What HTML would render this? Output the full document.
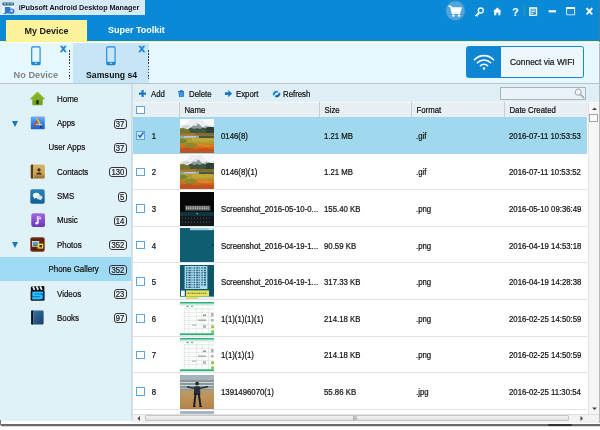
<!DOCTYPE html>
<html>
<head>
<meta charset="utf-8">
<title>iPubsoft Android Desktop Manager</title>
<style>
*{box-sizing:border-box;margin:0;padding:0}
html,body{width:600px;height:430px;overflow:hidden;background:#fff}
body{font-family:"Liberation Sans",sans-serif;font-size:7.8px;color:#222;position:relative}
.abs{position:absolute}
#win{position:absolute;left:0;top:0;width:600px;height:424px;background:#fff;overflow:hidden}
#shadow{position:absolute;left:1px;top:424px;width:599px;height:1.500px;background:#6a6a6a}
#shadow2{position:absolute;left:2px;top:425.500px;width:598px;height:1.500px;background:linear-gradient(#b9b9b9,#f6f6f6)}
#hdr{position:absolute;left:0;top:0;width:600px;height:42px;background:#0a89d7}
#title{position:absolute;left:0;top:0;width:145px;height:14.600px;background:#d5e9f7}
#title span{position:absolute;left:18.800px;top:2.800px;font-size:7.230px;font-weight:bold;color:#151515;white-space:nowrap;line-height:10px;transform:scaleY(1.12)}
#tab1{position:absolute;left:6px;top:20px;width:81px;height:22px;background:#fdf39b;font-size:9px;font-weight:bold;color:#1a1a1a;text-align:center;line-height:21px}
#tab1 b,#tab2 b{display:inline-block;position:relative;top:.7px;transform:scaleY(1.1)}
#tab2 b{top:.2px}
#tab2{position:absolute;left:108px;top:20px;font-size:9px;font-weight:bold;color:#fff;line-height:21px;white-space:nowrap}
#yline{position:absolute;left:0;top:40.800px;width:600px;height:1.700px;background:#f9f18f;z-index:2}
#devbar{position:absolute;left:0;top:42.500px;width:600px;height:40.500px;background:#e6f8fd}
#dev2{position:absolute;left:73px;top:0;width:76px;height:40.500px;background:#c6e5f6}
.devname{position:absolute;top:27.100px;font-size:8.7px;font-weight:bold;white-space:nowrap;line-height:11px;transform:scaleY(1.1);transform-origin:0 50%}
.devx{position:absolute;top:.5px;font-size:11.500px;font-weight:bold;color:#1583cf;line-height:10px;-webkit-text-stroke:.35px #1583cf}
.dots{position:absolute;top:7.500px;width:1.300px;height:29px;background:repeating-linear-gradient(#3a3a3a 0,#3a3a3a 1.700px,transparent 1.700px,transparent 3.100px)}
#wifi{position:absolute;left:466px;top:3.500px;width:118px;height:32px;border:1.300px solid #1587d3;border-radius:2.500px;background:#edf8fd}
#wifi .b{position:absolute;left:0;top:0;width:34px;height:30px;background:#0f86d4}
#wifi .t{position:absolute;left:43px;top:-.3px;line-height:30px;font-size:8.45px;color:#151515;white-space:nowrap;transform:scaleY(1.12);-webkit-text-stroke:.2px #151515}
#side{position:absolute;left:0;top:84px;width:131.200px;height:337px;background:#e1f1f8}
#sideb{position:absolute;left:131.200px;top:84px;width:1.800px;height:337px;background:linear-gradient(90deg,#c9d8df,#d9e4e9)}
.it{position:absolute;left:0;width:131px;height:24px}
.it .ic{position:absolute;left:30px;top:4px;width:15px;height:15px}
.it .tx{position:absolute;left:57px;top:1.2px;font-size:7.950px;line-height:24px;white-space:nowrap;color:#111;transform:scaleY(1.14);-webkit-text-stroke:.2px #111}
.it.sub .tx{left:48.5px}
.it .bd{position:absolute;right:4.5px;top:7.5px;height:10px;border:1px solid #333;border-radius:3px;padding:0 1.200px;line-height:8px;font-size:7.700px;color:#222;background:rgba(255,255,255,.25)}
.it .bd b{display:inline-block;position:relative;top:.9px;font-weight:normal;transform:scaleY(1.14);-webkit-text-stroke:.2px #222}
.it .ar{position:absolute;left:12px;top:9.5px;width:0;height:0;border-left:3.5px solid transparent;border-right:3.5px solid transparent;border-top:6px solid #1878bd}
.it.sel{background:#9edaf3}
#main{position:absolute;left:133px;top:84px;width:467px;height:338.500px;overflow:hidden;background:#fff}
#tb{position:absolute;left:0;top:0;width:467px;height:18px;background:#e0eff6}
#topline{position:absolute;left:0;top:83px;width:600px;height:1px;background:#b9c6cc}
.tbi{position:absolute;top:2.4px;line-height:18px;white-space:nowrap;color:#111;transform:scaleY(1.14);-webkit-text-stroke:.2px #111}
.tbic{position:absolute;top:5.8px;width:8px;height:8px}
#search{position:absolute;left:367px;top:2.5px;width:86px;height:13px;border:1px solid #aab4b9;background:#e9f3f8}
#th{position:absolute;left:0;top:18px;width:455px;height:15px;background:#e8eff3;border-top:1px solid #f3f8fa}
#th .c{position:absolute;top:-1px;height:15px;line-height:14px;border-left:1px solid #c3cdd3;padding-left:4.900px;color:#111;margin-left:.6px}
#th .c b{display:inline-block;font-weight:normal;position:relative;top:2.200px;transform:scaleY(1.14);-webkit-text-stroke:.2px #111}
.row{position:absolute;left:0;width:454px;height:36.6px;border-bottom:1px solid #dfe3e5;background:#fff}
.row.sel{background:#a0d9ee;border-bottom-color:#a0d9ee}
.row div{position:absolute;top:1.9px;line-height:36px;white-space:nowrap;color:#111;transform:scaleY(1.14);-webkit-text-stroke:.2px #111}
.row .cb,.hcb{position:absolute;left:3.300px;top:14px;width:8.5px;height:8.5px;border:1px solid #5fa4db;background:#fff}
.hcb{top:2.500px;left:3.300px}
.row .n{left:18.800px}
.row .th{left:47px;top:1.5px;width:34px;height:34px;overflow:hidden;transform:none;line-height:0}
.row .nm{left:88px}
.row .sz{left:191px}
.row .fm{left:283px}
.row .dt{left:376px}
#vs{position:absolute;left:455px;top:19px;width:12px;height:311px;background:#f6f6f6;border-left:1px solid #e2e2e2}
#hs{position:absolute;left:0;top:329.500px;width:467px;height:9.500px;background:#f2f2f2;border-top:1px solid #e0e0e0}
</style>
</head>
<body>
<div id="win">
  <div id="hdr">
    <div id="title">
      <svg class="abs" style="left:1.500px;top:1.500px" width="13" height="12.500" viewBox="0 0 13 12.500">
        <rect x=".3" y=".3" width="12" height="12" rx="1" fill="#f3f8fc"/>
        <rect x=".5" y=".4" width="11.400" height="3" rx=".7" fill="#1f5a7e"/>
        <path d="M1.800 1.900h2.400M5.200 1.900h2.200M8.400 1.900h2.400" stroke="#d8ecf6" stroke-width="1"/>
        <rect x="2.800" y="5" width="5.600" height="6.600" rx=".6" fill="#2c7bc9"/>
        <rect x="1.600" y="11.200" width="2.400" height=".8" fill="#2a5f86"/>
        <circle cx="9.700" cy="9.300" r="2.700" fill="#2f6fe6"/>
        <circle cx="9.500" cy="8.900" r="1.300" fill="#bfe6fb"/>
      </svg>
      <span>iPubsoft Android Desktop Manager</span>
    </div>
    <div id="tab1"><b>My Device</b></div>
    <div id="tab2"><b>Super Toolkit</b></div>
    <!-- title icons -->
    <svg class="abs" style="left:440px;top:0" width="160" height="22" viewBox="0 0 160 22">
      <circle cx="15.4" cy="10.700" r="9.600" fill="#50a6dc" stroke="#3c95cf" stroke-width=".6"/>
      <path d="M8.5 6.2h2.2l1.6 7h7.2l1.6-5.2h-10" fill="none" stroke="#fff" stroke-width="1.5" stroke-linejoin="round"/>
      <path d="M11.5 8.3h9.3l-1.4 4.4h-6.9z" fill="#fff"/>
      <circle cx="13.4" cy="15.6" r="1.2" fill="#fff"/><circle cx="19" cy="15.6" r="1.2" fill="#fff"/>
      <!-- key -->
      <circle cx="40.8" cy="10.5" r="2.5" fill="none" stroke="#fff" stroke-width="1.3"/>
      <path d="M38.9 12.4l-3.7 3.7m1.1-1.1l1.4 1.4m.2-2.800l1.200 1.200" stroke="#fff" stroke-width="1.3" fill="none"/>
      <!-- home -->
      <path d="M53 11.6l4.3-4.2 4.3 4.2h-1.2v3.7h-2.1v-2.6h-2v2.6h-2.1v-3.7z" fill="#fff"/>
      <!-- ? -->
      <text x="72" y="16.200" font-family="Liberation Sans, sans-serif" font-weight="bold" font-size="10.800" fill="#fff">?</text>
      <rect x="83.8" y="5" width=".8" height="11" fill="#39b36a"/>
      <!-- doc -->
      <path d="M89.900 8h6.600v7.400h-6.600z" fill="none" stroke="#fff" stroke-width="1.400"/>
      <path d="M91.200 10h4M91.200 11.700h4M91.200 13.400h2.400" stroke="#fff" stroke-width=".9"/>
      <path d="M95.2 13.2l2.2 2.6-1 .1-.3.9z" fill="#fff" stroke="#0a89d7" stroke-width=".3"/>
      <!-- min -->
      <rect x="108.7" y="10.2" width="7.3" height="2.2" fill="#fff"/>
      <!-- max -->
      <path d="M126.600 7.600h8v7.200h-8z" fill="none" stroke="#eaf4fb" stroke-width=".9"/>
      <rect x="126.2" y="7" width="8.8" height="2" fill="#fff"/>
      <!-- close -->
      <path d="M146.6 8.2l5.6 6.2m0-6.2l-5.6 6.2" stroke="#fff" stroke-width="1.9"/>
    </svg>
  </div>
  <div id="yline"></div>
  <div id="devbar">
    <div id="dev2"></div>
    <svg class="abs" style="left:31px;top:3.800px" width="10.200" height="19.800" preserveAspectRatio="none" viewBox="0 0 11 20">
      <rect x=".8" y=".8" width="9" height="18" rx="1" fill="#e6f8fd" stroke="#1b86d2" stroke-width="1.200"/>
      <rect x=".8" y="16" width="9" height="2.800" fill="#1b86d2"/><rect x="4" y="16.900" width="2.600" height=".9" fill="#d9eefa"/>
    </svg>
    <div class="devname" style="left:13.600px;top:27.400px;color:#848484;font-size:9.200px;transform:scaleY(1.02)">No Device</div>
    <div class="devx" style="left:60px">x</div>
    <div class="dots" style="left:69px"></div>
    <svg class="abs" style="left:106px;top:3.800px" width="10.200" height="19.800" preserveAspectRatio="none" viewBox="0 0 11 20">
      <rect x=".8" y=".8" width="9" height="18" rx="1" fill="#c9e7f7" stroke="#1b86d2" stroke-width="1.200"/>
      <rect x=".8" y="16" width="9" height="2.800" fill="#1b86d2"/><rect x="4" y="16.900" width="2.600" height=".9" fill="#d9eefa"/>
    </svg>
    <div class="devname" style="left:86px;color:#111">Samsung s4</div>
    <div class="devx" style="left:138.500px">x</div>
    <div class="dots" style="left:148px"></div>
    <div id="wifi"><div class="b">
      <svg class="abs" style="left:5.500px;top:7px" width="22" height="16.500" viewBox="0 0 24 18">
        <path d="M1.6 6.2a14.5 14.5 0 0 1 20.8 0" fill="none" stroke="#fff" stroke-width="1.7" stroke-linecap="round"/>
        <path d="M4.8 9.6a10 10 0 0 1 14.4 0" fill="none" stroke="#fff" stroke-width="1.7" stroke-linecap="round"/>
        <path d="M8 12.8a5.6 5.6 0 0 1 8 0" fill="none" stroke="#fff" stroke-width="1.7" stroke-linecap="round"/>
        <circle cx="12" cy="15.8" r="1.3" fill="#fff"/>
      </svg></div>
      <div class="t">Connect via WIFI</div>
    </div>
  </div>
  <div id="topline"></div>
  <div class="abs" style="left:599px;top:0;width:1px;height:42px;background:#3f7ea8;z-index:5"></div><div class="abs" style="left:598.5px;top:43px;width:1.5px;height:380px;background:#b4bcc0;z-index:5"></div>
  <div id="side">
<div class="it" style="top:3.0px"><svg class="ic" viewBox="0 0 15 15"><path d="M7.500 .800L.300 7.700l.700.900 1.300-.600v5.200c0 .600.400 1 1 1h8.400c.600 0 1-.400 1-1V8l1.300.600.700-.900z" fill="#76a31f"/><path d="M7.500 .800L.300 7.700l.700.900L7.500 3l6.500 5.600.700-.900z" fill="#93bd2e"/><path d="M7.500 3.400L3 7.400v2.200l4.500-1.600 4.500 1.600V7.400z" fill="#84b026"/><rect x="6.300" y="9.200" width="2.400" height="4" rx=".4" fill="#1b2430"/></svg><span class="tx">Home</span></div>
<div class="it" style="top:27.2px"><i class="ar"></i><svg class="ic" viewBox="0 0 15 15"><defs><linearGradient id="ga" x1="0" y1="0" x2="0" y2="1"><stop offset="0" stop-color="#6fb2f2"/><stop offset=".55" stop-color="#2f7fe6"/><stop offset="1" stop-color="#1a5fdc"/></linearGradient></defs><rect x=".800" y="1.600" width="14" height="12.600" rx=".8" fill="url(#ga)"/><path d="M4.300 11.800L8.300 3.400" stroke="#d8392b" stroke-width="1.500"/><path d="M11 11.800L6.800 3.200" stroke="#f0c93a" stroke-width="1.400"/><path d="M3.400 9.400h8.600" stroke="#d9c9a0" stroke-width="1.100"/><path d="M10.400 10.600l1 2" stroke="#222" stroke-width="1.300"/><path d="M3.600 9.400h2" stroke="#c0392b" stroke-width="1.300"/></svg><span class="tx">Apps</span><span class="bd"><b>37</b></span></div>
<div class="it sub" style="top:51.3px"><span class="tx">User Apps</span><span class="bd"><b>37</b></span></div>
<div class="it" style="top:75.7px"><svg class="ic" viewBox="0 0 15 15"><defs><linearGradient id="gc" x1="0" y1="0" x2="0" y2="1"><stop offset="0" stop-color="#d9b86c"/><stop offset=".7" stop-color="#c59a4c"/><stop offset="1" stop-color="#8a6428"/></linearGradient></defs><rect x=".800" y=".400" width="14" height="14.200" rx="1.600" fill="url(#gc)"/><rect x=".800" y=".400" width="3" height="14.200" rx="1.200" fill="#5a3c14"/><rect x="3.300" y=".400" width=".8" height="14.200" fill="#e6cf8e"/><circle cx="9" cy="5.800" r="1.600" fill="#3e2a10"/><path d="M6.400 10.400c0-2.600 5.200-2.600 5.200 0z" fill="#3e2a10"/></svg><span class="tx">Contacts</span><span class="bd"><b>130</b></span></div>
<div class="it" style="top:100.2px"><svg class="ic" style="top:4.700px" viewBox="0 0 15 15"><defs><linearGradient id="gs" x1="0" y1="0" x2="0" y2="1"><stop offset="0" stop-color="#2a86b8"/><stop offset="1" stop-color="#0f5f93"/></linearGradient></defs><rect x=".3" y=".3" width="14.4" height="14.4" rx="1.8" fill="url(#gs)"/><ellipse cx="6.3" cy="6.4" rx="3.4" ry="2.6" fill="#f2f8fb"/><path d="M4.4 8l-.6 2 2-1.2z" fill="#f2f8fb"/><ellipse cx="9.6" cy="8.4" rx="2.8" ry="2.1" fill="#cfe4ee"/><path d="M10.8 9.8l.8 1.6-2-.8z" fill="#cfe4ee"/></svg><span class="tx">SMS</span><span class="bd"><b>5</b></span></div>
<div class="it" style="top:124.3px"><svg class="ic" style="top:5px;left:30.600px;width:14.400px;height:14.400px" viewBox="0 0 15 15"><defs><linearGradient id="gm" x1="0" y1="0" x2="0" y2="1"><stop offset="0" stop-color="#a06be0"/><stop offset="1" stop-color="#6a35b8"/></linearGradient></defs><rect x=".3" y=".3" width="14.4" height="14.4" rx="2.4" fill="url(#gm)"/><path d="M6.6 10.4V3.6l3.4 1v1.6l-2.4-.8v5.2" fill="none" stroke="#f3eafd" stroke-width="1"/><ellipse cx="6" cy="10.6" rx="1.6" ry="1.3" fill="#f3eafd"/></svg><span class="tx">Music</span><span class="bd"><b>14</b></span></div>
<div class="it" style="top:148.8px"><i class="ar"></i><svg class="ic" viewBox="0 0 15 15"><rect x=".3" y=".3" width="14.4" height="14.4" rx="2" fill="#7a3218"/><rect x="1.2" y="1.2" width="12.6" height="12.6" rx="1.4" fill="#5d2410"/><rect x="2" y="4" width="7.2" height="5.6" fill="#e8f0e0" /><rect x="2.7" y="4.7" width="5.8" height="4.2" fill="#5b9bd0"/><path d="M2.7 8.9l2-2 1.6 1.2 1.2-1 1 1.8z" fill="#4c8a3a"/><rect x="7.6" y="6.6" width="5.6" height="5" fill="#f4d53a"/><rect x="9.4" y="8" width="2.6" height="2.4" fill="#333"/></svg><span class="tx">Photos</span><span class="bd"><b>352</b></span></div>
<div class="it sub sel" style="top:173.2px"><span class="tx">Phone Gallery</span><span class="bd"><b>352</b></span></div>
<div class="it" style="top:197.8px"><svg class="ic" viewBox="0 0 15 15"><rect x=".600" y="3.800" width="14" height="11" rx="1.600" fill="#0c1116"/><path d="M.800 1.400Q.800 .4 2 .4L13.400 0q1 0 1 1v3H.800z" fill="#111"/><path d="M3 .600l1.600 3.200M6.600 .400l1.600 3.400M10.200 .300l1.600 3.500" stroke="#f4f4f4" stroke-width="1.700"/><rect x="1.800" y="5.600" width="11.600" height="7.800" rx=".6" fill="#1767c9"/><path d="M12.600 6.600H5c-2.200 0-2.200 2.800 0 2.800h5c2 0 2 2.800 0 2.800H2.400" fill="none" stroke="#25c9f7" stroke-width="1.900"/></svg><span class="tx">Videos</span><span class="bd"><b>23</b></span></div>
<div class="it" style="top:221.8px"><svg class="ic" viewBox="0 0 15 15"><defs><linearGradient id="gb" x1="0" y1="0" x2="1" y2="1"><stop offset="0" stop-color="#3a78a8"/><stop offset="1" stop-color="#173f66"/></linearGradient></defs><rect x="1.2" y=".6" width="12.4" height="13.8" rx=".8" fill="url(#gb)"/><rect x="1.2" y=".6" width="2.2" height="13.8" fill="#0a0f14"/><rect x="3.4" y=".6" width=".6" height="13.8" fill="#5b93bd"/></svg><span class="tx">Books</span><span class="bd"><b>97</b></span></div>
</div>
  <div id="sideb"></div>
  <div id="main">
<div id="tb">
<svg class="tbic" style="left:6.300px;top:6.100px;width:7.200px;height:7.200px" viewBox="0 0 8 8"><path d="M2.8 0h2.4v2.8H8v2.4H5.2V8H2.8V5.2H0V2.8h2.8z" fill="#1679c6"/></svg><span class="tbi" style="left:18px">Add</span>
<svg class="abs" style="left:44.600px;top:5.800px" width="6.800" height="7.600" viewBox="0 0 8 9"><path d="M.6 2.800h6.800l-.5 4.800q-.1 1.200-1.300 1.200H2.400q-1.200 0-1.300-1.200z" fill="#1f86d6"/><rect x="0" y="1.300" width="8" height="1.300" rx=".4" fill="#1a74c4"/><rect x="2.600" y=".1" width="2.800" height="1.400" rx=".5" fill="#1a74c4"/><path d="M2.800 4.200v3.400M4 4.200v3.400M5.200 4.200v3.400" stroke="#8fc6ee" stroke-width=".5"/></svg><span class="tbi" style="left:56px">Delete</span>
<svg class="tbic" style="left:92px;top:6.100px;width:7.200px;height:7.200px" viewBox="0 0 8 8"><path d="M0 2.4h3.6V0L8 4 3.6 8V5.6H0z" fill="#1679c6"/></svg><span class="tbi" style="left:103px">Export</span>
<svg class="abs" style="left:138.500px;top:6.300px" width="9" height="8" viewBox="0 0 9 8"><path d="M1.700 4.400C2 2.600 3.600 1.600 5 1.700" fill="none" stroke="#1c8dd8" stroke-width="2.100" stroke-linecap="round"/><path d="M4 6.300C5.600 6.400 7 5.400 7.400 3.700" fill="none" stroke="#1668c2" stroke-width="2.100" stroke-linecap="round"/></svg><span class="tbi" style="left:150px">Refresh</span>
<div id="search"><svg class="abs" style="left:73px;top:0.5px" width="11" height="11" viewBox="0 0 11 11"><circle cx="4.2" cy="4.2" r="3" fill="#f4f8fa" stroke="#a9b1b6" stroke-width="1.2"/><path d="M6.4 6.4l3.6 3.6" stroke="#a9b1b6" stroke-width="1.8"/></svg></div>
</div>
<div id="th"><i class="hcb"></i>
<div class="c" style="left:45px;width:140px"><b>Name</b></div>
<div class="c" style="left:185px;width:92px"><b>Size</b></div>
<div class="c" style="left:277px;width:93px"><b>Format</b></div>
<div class="c" style="left:370px;width:85px"><b>Date Created</b></div>
</div>
<div class="row sel" style="top:33.0px"><i class="cb" style="background:#cfe8f7"><svg style="position:absolute;left:0;top:-1px" width="8" height="8" viewBox="0 0 8 8"><path d="M1.200 4l1.800 2 3.600-4.600" fill="none" stroke="#1b6fc0" stroke-width="1.500"/></svg></i><div class="n">1</div><div class="th"><svg width="34" height="34" viewBox="0 0 34 34"><defs><filter id="bl0" x="-5%" y="-5%" width="110%" height="110%"><feGaussianBlur stdDeviation=".6"/></filter><filter id="nz0" x="0" y="0" width="100%" height="100%"><feTurbulence type="fractalNoise" baseFrequency=".55" numOctaves="2" seed="3"/><feColorMatrix values="0 0 0 0 .25  0 0 0 0 .18  0 0 0 0 .05  1.400 0 0 0 -.55"/></filter><linearGradient id="Lg0" x1="0" y1="0" x2="0" y2="1"><stop offset="0" stop-color="#d77a22"/><stop offset=".5" stop-color="#d0641c"/><stop offset="1" stop-color="#b9501a"/></linearGradient></defs><rect width="34" height="34" fill="#c9651d"/><g filter="url(#bl0)"><rect x="-2" y="-2" width="38" height="13" fill="#eceff1"/><path d="M-2 -2h13l-2 5-5 3-6 1z" fill="#fdfdfd"/><path d="M9 10.500l4-4 3-2.500 3 1 3 3 3 2.500z" fill="#8d999d"/><path d="M13 6.500l3-2.500 2 .6-2 2.400z" fill="#e6eaec"/><path d="M22 9.500l4-3 4 1 6 1v3z" fill="#a9b3b7"/><path d="M22 0h14v5.500l-6 1-5-2z" fill="#f8f9fa"/><path d="M2 7l5-1 4 1-3 2-6 .5z" fill="#cfd6d9"/><path d="M8 10l3-1.500 3 1.500 3-1 3 1 3-1.500 3 1 3-1.500 3 .5 4-.5v6h-28z" fill="#3a5540"/><path d="M26 8.500l4-.5 6 .5v6h-10z" fill="#263f30"/><path d="M-2 9.500l5-.5 4 1 3 1.500v4h-12z" fill="#75742f"/><rect x="-2" y="14.300" width="38" height="2.700" fill="#a9782a"/><path d="M16 14.300h20v2h-20z" fill="#7d6a2c"/><rect x="-2" y="16.700" width="38" height="2.500" fill="#93a7ad"/><path d="M4 17.200h12v1.300h-12z" fill="#c9d5d8"/><path d="M19 16.700h17v2.500h-17z" fill="#44583e"/><rect x="-2" y="19" width="38" height="6" fill="#b39f30"/><path d="M-2 19.500l7 .5 3 2-4 2.500-6 .5z" fill="#6f8a34"/><path d="M12 19.500l10-.3 12 .8v2l-12 1-10-1z" fill="#c4ac34"/><rect x="-2" y="24.500" width="38" height="12" fill="url(#Lg0)"/><path d="M5 24.500l6-1 5 1.500-1.500 3.500-6 1-3.500-2z" fill="#8d8a2c"/><path d="M18 25l8 .3 8 1.700-7 1.200-9-1z" fill="#dd8826"/><path d="M-2 30l10-1.500 8 2 10-1 10 1v5h-38z" fill="#c2521b"/><path d="M20 30l6-.5 5 1.500-6 1.500z" fill="#d9481c"/></g><rect y="10" width="34" height="24" filter="url(#nz0)" opacity=".38"/></svg></div><div class="nm">0146(8)</div><div class="sz">1.21 MB</div><div class="fm">.gif</div><div class="dt">2016-07-11 10:53:53</div></div>
<div class="row" style="top:69.6px"><i class="cb"></i><div class="n">2</div><div class="th"><svg width="34" height="34" viewBox="0 0 34 34"><defs><filter id="bl1" x="-5%" y="-5%" width="110%" height="110%"><feGaussianBlur stdDeviation=".6"/></filter><filter id="nz1" x="0" y="0" width="100%" height="100%"><feTurbulence type="fractalNoise" baseFrequency=".55" numOctaves="2" seed="4"/><feColorMatrix values="0 0 0 0 .25  0 0 0 0 .18  0 0 0 0 .05  1.400 0 0 0 -.55"/></filter><linearGradient id="Lg1" x1="0" y1="0" x2="0" y2="1"><stop offset="0" stop-color="#d77a22"/><stop offset=".5" stop-color="#d0641c"/><stop offset="1" stop-color="#b9501a"/></linearGradient></defs><rect width="34" height="34" fill="#c9651d"/><g filter="url(#bl1)"><rect x="-2" y="-2" width="38" height="13" fill="#eceff1"/><path d="M-2 -2h13l-2 5-5 3-6 1z" fill="#fdfdfd"/><path d="M9 10.500l4-4 3-2.500 3 1 3 3 3 2.500z" fill="#8d999d"/><path d="M13 6.500l3-2.500 2 .6-2 2.400z" fill="#e6eaec"/><path d="M22 9.500l4-3 4 1 6 1v3z" fill="#a9b3b7"/><path d="M22 0h14v5.500l-6 1-5-2z" fill="#f8f9fa"/><path d="M2 7l5-1 4 1-3 2-6 .5z" fill="#cfd6d9"/><path d="M8 10l3-1.500 3 1.500 3-1 3 1 3-1.500 3 1 3-1.500 3 .5 4-.5v6h-28z" fill="#3a5540"/><path d="M26 8.500l4-.5 6 .5v6h-10z" fill="#263f30"/><path d="M-2 9.500l5-.5 4 1 3 1.500v4h-12z" fill="#75742f"/><rect x="-2" y="14.300" width="38" height="2.700" fill="#a9782a"/><path d="M16 14.300h20v2h-20z" fill="#7d6a2c"/><rect x="-2" y="16.700" width="38" height="2.500" fill="#93a7ad"/><path d="M4 17.200h12v1.300h-12z" fill="#c9d5d8"/><path d="M19 16.700h17v2.500h-17z" fill="#44583e"/><rect x="-2" y="19" width="38" height="6" fill="#b39f30"/><path d="M-2 19.500l7 .5 3 2-4 2.500-6 .5z" fill="#6f8a34"/><path d="M12 19.500l10-.3 12 .8v2l-12 1-10-1z" fill="#c4ac34"/><rect x="-2" y="24.500" width="38" height="12" fill="url(#Lg1)"/><path d="M5 24.500l6-1 5 1.500-1.500 3.500-6 1-3.500-2z" fill="#8d8a2c"/><path d="M18 25l8 .3 8 1.700-7 1.200-9-1z" fill="#dd8826"/><path d="M-2 30l10-1.500 8 2 10-1 10 1v5h-38z" fill="#c2521b"/><path d="M20 30l6-.5 5 1.500-6 1.500z" fill="#d9481c"/></g><rect y="10" width="34" height="24" filter="url(#nz1)" opacity=".38"/></svg></div><div class="nm">0146(8)(1)</div><div class="sz">1.21 MB</div><div class="fm">.gif</div><div class="dt">2016-07-11 10:53:52</div></div>
<div class="row" style="top:106.2px"><i class="cb"></i><div class="n">3</div><div class="th"><svg width="34" height="34" viewBox="0 0 34 34"><rect width="34" height="34" fill="#070707"/><rect x="5" y="13.600" width="25.500" height="5.200" fill="#4b4f52"/><path d="M6 15h23M6 16.800h23" stroke="#e8e8e8" stroke-width=".9" stroke-dasharray="1.300 .5"/><rect x="0" y="19.800" width="34" height="4.200" fill="#10353d"/><rect x="16.500" y="21.300" width="1.600" height=".9" fill="#c9d6d9"/><rect x="0" y="24" width="34" height="10" fill="#12181b"/><path d="M2 26.300h30M2 30.200h30" stroke="#59646a" stroke-width=".9" stroke-dasharray=".9 2.100"/></svg></div><div class="nm">Screenshot_2016-05-10-0...</div><div class="sz">155.40 KB</div><div class="fm">.png</div><div class="dt">2016-05-10 09:36:49</div></div>
<div class="row" style="top:142.8px"><i class="cb"></i><div class="n">4</div><div class="th"><svg width="34" height="34" viewBox="0 0 34 34"><rect width="34" height="34" fill="#0e5d70"/><rect x="10" y="0" width="24" height="2.200" fill="#9ed2e5"/><rect x="29" y=".3" width="3" height="1.600" fill="#dff1f8"/><circle cx="33" cy="17" r="1" fill="#083842"/></svg></div><div class="nm">Screenshot_2016-04-19-1...</div><div class="sz">90.59 KB</div><div class="fm">.png</div><div class="dt">2016-04-19 14:53:18</div></div>
<div class="row" style="top:179.4px"><i class="cb"></i><div class="n">5</div><div class="th"><svg width="34" height="34" viewBox="0 0 34 34"><defs><filter id="bt2"><feGaussianBlur stdDeviation=".35"/></filter></defs><rect width="34" height="34" fill="#0e5668"/><rect x="4.600" y="1" width="22.800" height="23" fill="#a6dcf2"/><g filter="url(#bt2)"><path d="M6 3h20M6 5.400h20M6 7.800h20M6 10.200h20M6 12.600h20M6 15h20M6 17.400h20M6 19.800h20M6 22.200h14" stroke="#2f5d78" stroke-width="1.500" stroke-dasharray="1.400 1.100 2.200 .9 .8 1.300"/></g><rect x="1" y="25.600" width="3.800" height="5.400" fill="#f2f6f8"/><rect x="6" y="25.400" width="23" height="6" fill="#e9e35c"/><path d="M7.500 28.300h19" stroke="#6c6a2a" stroke-width="1.100" stroke-dasharray="1.500 .7"/><rect x="0" y="31.600" width="34" height="2.400" fill="#e8f0f0"/><rect x="6" y="31.800" width="12.500" height="2.200" fill="#dbe25a"/></svg></div><div class="nm">Screenshot_2016-04-19-1...</div><div class="sz">317.33 KB</div><div class="fm">.png</div><div class="dt">2016-04-19 14:28:38</div></div>
<div class="row" style="top:216.0px"><i class="cb"></i><div class="n">6</div><div class="th"><svg width="34" height="34" viewBox="0 0 34 34"><rect width="34" height="34" fill="#fbfcfb"/><rect width="34" height="1.700" fill="#2bb27a"/><rect y="1.700" width="34" height="1.800" fill="#c9ecda"/><rect x="6" y="3.800" width="3" height="1.300" fill="#9fb0a8"/><rect x="11" y="3.800" width="2" height="1.300" fill="#5fbf95"/><rect x="4" y="6" width="30" height="1.400" fill="#e2f3ea"/><path d="M4.500 6v25M9 6v25M16.500 6v25M22 6v25M28.500 6v25M4 10.500h30M4 14.500h30M4 18.500h30M4 22.500h30M4 26.500h30" stroke="#d5dedb" stroke-width=".5"/><rect x="23" y="12.500" width="3" height="1.600" fill="#8e9a96"/><rect x="18" y="17.600" width="8" height="1.100" fill="#8e9a96"/><rect x="12" y="22.600" width="4" height="1" fill="#a5afac"/><rect x="23" y="23" width="3" height="3" fill="#b5bfbb"/><rect x="31" y="11" width="2.500" height="3.500" fill="#a9b5b0"/><rect x="31" y="17" width="2.500" height="2.500" fill="#a9b5b0"/><rect x="31.200" y="23.200" width="2.800" height="3" rx=".8" fill="#86c540"/><rect x="31.200" y="28.200" width="2.800" height="3" rx=".8" fill="#86c540"/><rect y="31.300" width="34" height="1.700" fill="#2bb27a"/><rect y="33" width="34" height="1" fill="#d2eee0"/></svg></div><div class="nm">1(1)(1)(1)(1)</div><div class="sz">214.18 KB</div><div class="fm">.png</div><div class="dt">2016-02-25 14:50:59</div></div>
<div class="row" style="top:252.6px"><i class="cb"></i><div class="n">7</div><div class="th"><svg width="34" height="34" viewBox="0 0 34 34"><rect width="34" height="34" fill="#fbfcfb"/><rect width="34" height="1.700" fill="#2bb27a"/><rect y="1.700" width="34" height="1.800" fill="#c9ecda"/><rect x="6" y="3.800" width="3" height="1.300" fill="#9fb0a8"/><rect x="11" y="3.800" width="2" height="1.300" fill="#5fbf95"/><rect x="4" y="6" width="30" height="1.400" fill="#e2f3ea"/><path d="M4.500 6v25M9 6v25M16.500 6v25M22 6v25M28.500 6v25M4 10.500h30M4 14.500h30M4 18.500h30M4 22.500h30M4 26.500h30" stroke="#d5dedb" stroke-width=".5"/><rect x="23" y="12.500" width="3" height="1.600" fill="#8e9a96"/><rect x="18" y="17.600" width="8" height="1.100" fill="#8e9a96"/><rect x="12" y="22.600" width="4" height="1" fill="#a5afac"/><rect x="23" y="23" width="3" height="3" fill="#b5bfbb"/><rect x="31" y="11" width="2.500" height="3.500" fill="#a9b5b0"/><rect x="31" y="17" width="2.500" height="2.500" fill="#a9b5b0"/><rect x="31.200" y="23.200" width="2.800" height="3" rx=".8" fill="#86c540"/><rect x="31.200" y="28.200" width="2.800" height="3" rx=".8" fill="#86c540"/><rect y="31.300" width="34" height="1.700" fill="#2bb27a"/><rect y="33" width="34" height="1" fill="#d2eee0"/></svg></div><div class="nm">1(1)(1)(1)</div><div class="sz">214.18 KB</div><div class="fm">.png</div><div class="dt">2016-02-25 14:50:59</div></div>
<div class="row" style="top:289.2px"><i class="cb"></i><div class="n">8</div><div class="th"><svg width="34" height="34" viewBox="0 0 34 34"><defs><filter id="bb"><feGaussianBlur stdDeviation=".4"/></filter><linearGradient id="Bs" x1="0" y1="0" x2="0" y2="1"><stop offset="0" stop-color="#b79a6c"/><stop offset=".4" stop-color="#bd9257"/><stop offset="1" stop-color="#b07f43"/></linearGradient></defs><rect width="34" height="34" fill="#b88c52"/><g filter="url(#bb)"><rect x="-2" y="-2" width="38" height="8" fill="#a7b2bb"/><rect x="-2" y="5" width="38" height="10" fill="#87979a"/><path d="M-2 7.500h38M-2 10.500h38" stroke="#cfd8d8" stroke-width="1"/><path d="M-2 13.400h38" stroke="#a9b6b3" stroke-width="1.200"/><rect x="-2" y="15" width="38" height="21" fill="url(#Bs)"/><path d="M7.500 12l6 1.300 3.500-1 3.500 1 7-1.600" stroke="#27303d" stroke-width="1.500" fill="none" stroke-linecap="round"/><path d="M14.300 11.600h5.600l.5 8.400h-6.600z" fill="#252d3a"/><circle cx="17.100" cy="8.600" r="1.900" fill="#2e2420"/><path d="M15.400 19.600l-1.200 11M18.900 19.600l1.500 11" stroke="#1b2029" stroke-width="2" stroke-linecap="round"/><path d="M13 31.500h2.400M19.400 31.500h2.400" stroke="#111" stroke-width="1"/></g></svg></div><div class="nm">1391496070(1)</div><div class="sz">55.86 KB</div><div class="fm">.jpg</div><div class="dt">2016-02-25 11:30:54</div></div>
<div class="row" style="top:325.8px;border:0"><div class="th" style="background:#a9b6c1"></div></div>
<div id="vs">
<svg class="abs" style="left:3px;top:3.500px" width="5" height="3.500" viewBox="0 0 6 4"><path d="M0 3.5L3 .5l3 3z" fill="#444"/></svg>
<div class="abs" style="left:.3px;top:10.500px;width:8.300px;height:8.500px;background:#fafafa;border:1px solid #a6a6a6"></div>
<svg class="abs" style="left:3px;top:304px" width="5" height="3.500" viewBox="0 0 6 4"><path d="M0 .5L3 3.5l3-3z" fill="#444"/></svg>
</div>
<div id="hs">
<svg class="abs" style="left:4px;top:1.500px" width="3.500" height="5" viewBox="0 0 4 6"><path d="M3.5 0L.5 3l3 3z" fill="#444"/></svg>
<div class="abs" style="left:12px;top:.3px;width:423.500px;height:6.700px;background:linear-gradient(#f4f4f4,#dedede);border:1px solid #c6c6c6;border-radius:1px;font-size:5px;line-height:5px;text-align:center;color:#666"><span style="position:relative;left:-2px">III</span></div>
<svg class="abs" style="left:447px;top:1.500px" width="3.500" height="5" viewBox="0 0 4 6"><path d="M.5 0l3 3-3 3z" fill="#444"/></svg>
</div>
</div>
</div>
<div class="abs" style="left:0;top:420px;width:1.300px;height:4.500px;background:#777"></div><div id="shadow"></div><div id="shadow2"></div><div class="abs" style="left:548px;top:424.300px;width:24px;height:1.500px;background:#333;border-radius:1px"></div>
</body>
</html>
